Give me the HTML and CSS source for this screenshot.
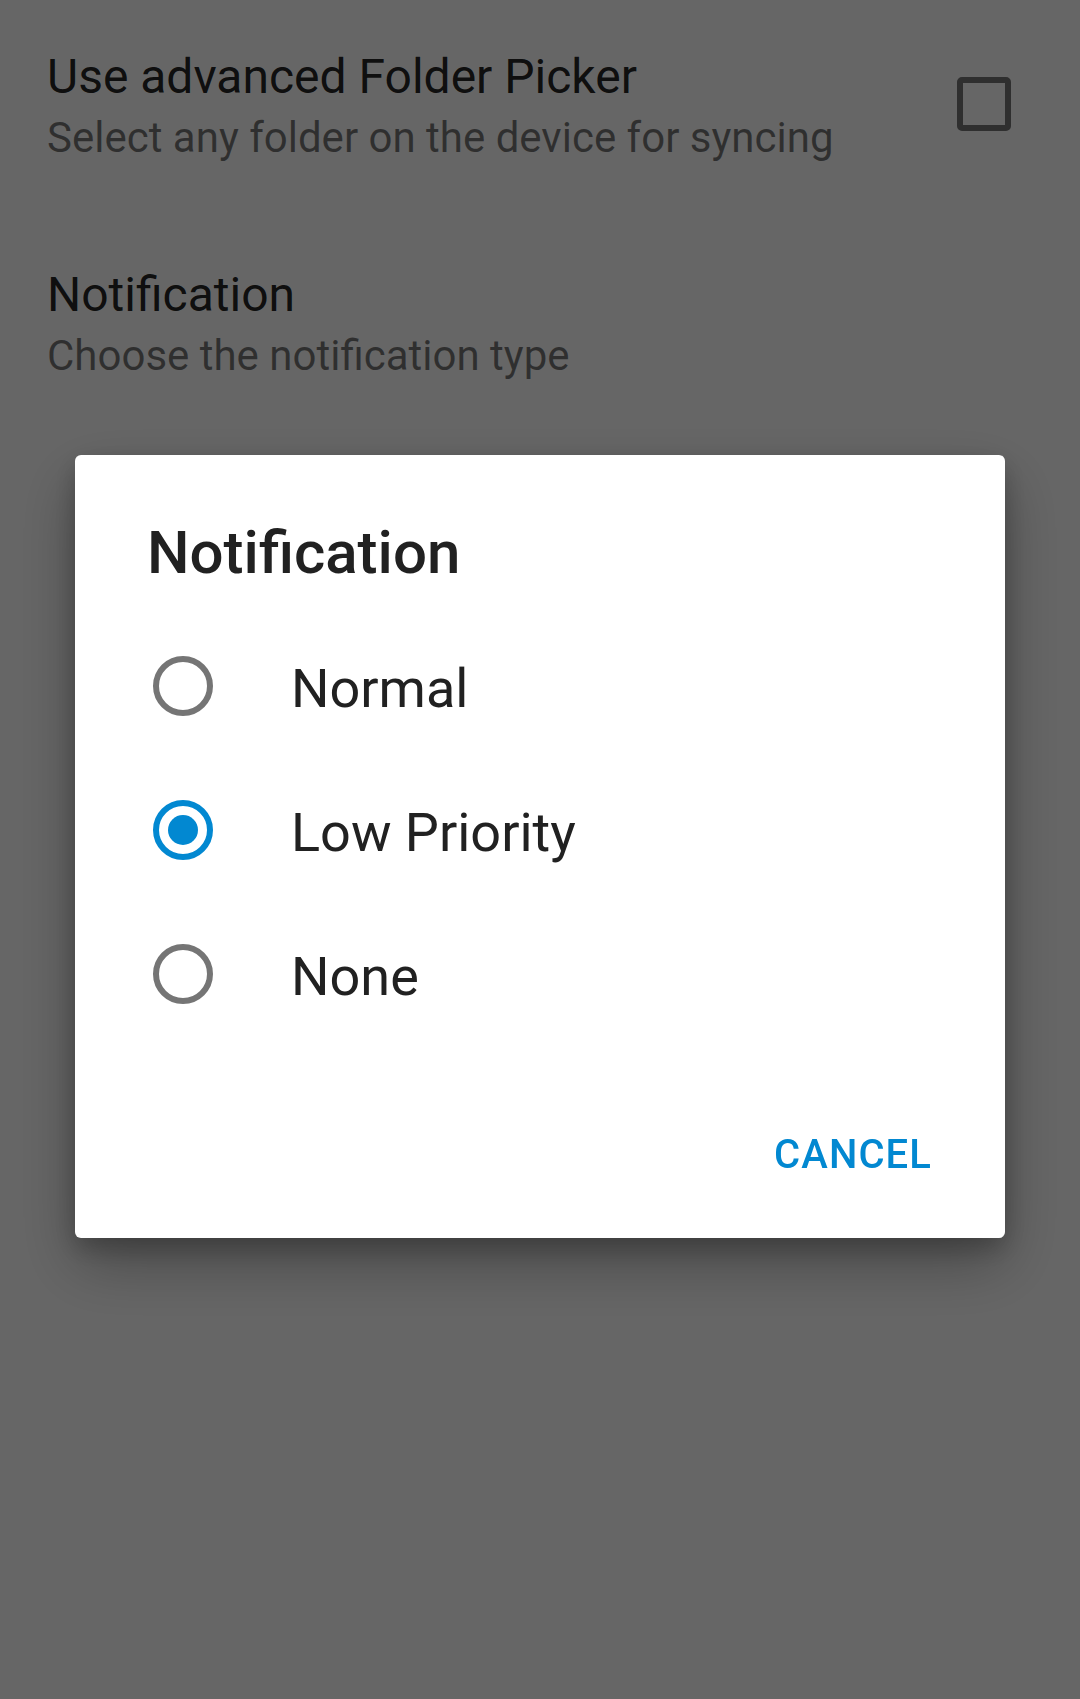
FILE: index.html
```html
<!DOCTYPE html>
<html lang="en">
<head>
<meta charset="utf-8">
<title>Notification</title>
<link rel="stylesheet" href="styles.css">
</head>
<body>
<main class="prefs">
  <div class="pref">
    <div class="pref-text">
      <div class="pref-title">Use advanced Folder Picker</div>
      <div class="pref-summary">Select any folder on the device for syncing</div>
    </div>
    <span class="checkbox"></span>
  </div>
  <div class="pref">
    <div class="pref-text">
      <div class="pref-title">Notification</div>
      <div class="pref-summary">Choose the notification type</div>
    </div>
  </div>
</main>

<div class="scrim">
  <section class="dialog" role="dialog" aria-labelledby="dlg-title">
    <h1 class="dialog-title" id="dlg-title">Notification</h1>
    <ul class="choices">
      <li class="choice"><span class="radio"></span><span class="choice-label">Normal</span></li>
      <li class="choice"><span class="radio radio-on"></span><span class="choice-label">Low Priority</span></li>
      <li class="choice"><span class="radio"></span><span class="choice-label">None</span></li>
    </ul>
    <div class="buttons">
      <button class="btn">CANCEL</button>
    </div>
  </section>
</div>
</body>
</html>
```

FILE: styles.css
```css
html, body {
  margin: 0;
  padding: 0;
  height: 100%;
}
body {
  background: #ffffff;
  font-family: Roboto, "Noto Sans", "Liberation Sans", sans-serif;
  color: #000;
}

/* ---------- background preference list ---------- */
.prefs {
  display: flex;
  flex-direction: column;
}
.pref {
  display: flex;
  align-items: center;
  padding: 49px 69px 55px 47px;
}
.pref-text {
  flex: 1;
  display: flex;
  flex-direction: column;
  gap: 8px;
}
.pref-title {
  font-size: 48px;
  line-height: 56px;
  color: rgba(0, 0, 0, 0.87);
}
.pref-summary {
  font-size: 42px;
  line-height: 50px;
  color: rgba(0, 0, 0, 0.54);
}
.checkbox {
  width: 54px;
  height: 54px;
  box-sizing: border-box;
  border: 6px solid #757575;
  border-radius: 5px;
  flex: none;
  margin-bottom: 4px;
}

/* ---------- scrim + dialog (overlay) ---------- */
.scrim {
  position: fixed;
  inset: 0;
  background: rgba(0, 0, 0, 0.6);
  display: flex;
  align-items: center;
  justify-content: center;
  padding-bottom: 7px;
  box-sizing: border-box;
}
.dialog {
  width: 930px;
  box-sizing: border-box;
  background: #ffffff;
  border-radius: 6px;
  box-shadow: 0 26px 60px rgba(0, 0, 0, 0.30), 0 10px 24px rgba(0, 0, 0, 0.22);
  padding: 63px 0 29px 0;
  display: flex;
  flex-direction: column;
}
.dialog-title {
  margin: 0;
  padding: 0 72px;
  font-size: 60px;
  line-height: 70px;
  font-weight: 500;
  color: #212121;
}
.choices {
  list-style: none;
  margin: 26px 0 0 0;
  padding: 0;
}
.choice {
  height: 144px;
  display: flex;
  align-items: center;
  gap: 78px;
  padding-left: 78px;
}
.radio {
  width: 60px;
  height: 60px;
  box-sizing: border-box;
  border: 6px solid #757575;
  border-radius: 50%;
  flex: none;
  display: flex;
  align-items: center;
  justify-content: center;
}
.radio-on {
  border-color: #0288d1;
}
.radio-on::after {
  content: "";
  width: 30px;
  height: 30px;
  border-radius: 50%;
  background: #0288d1;
}
.choice-label {
  font-size: 54px;
  line-height: 64px;
  padding-top: 6px;
  color: #212121;
}
.buttons {
  display: flex;
  justify-content: flex-end;
  margin-top: 55px;
  padding-right: 49px;
}
.btn {
  height: 108px;
  padding: 0 24px;
  border: 0;
  background: transparent;
  font-family: Roboto, "Noto Sans", "Liberation Sans", sans-serif;
  font-size: 40px;
  font-weight: 500;
  letter-spacing: 1.1px;
  color: #0288d1;
}
```
